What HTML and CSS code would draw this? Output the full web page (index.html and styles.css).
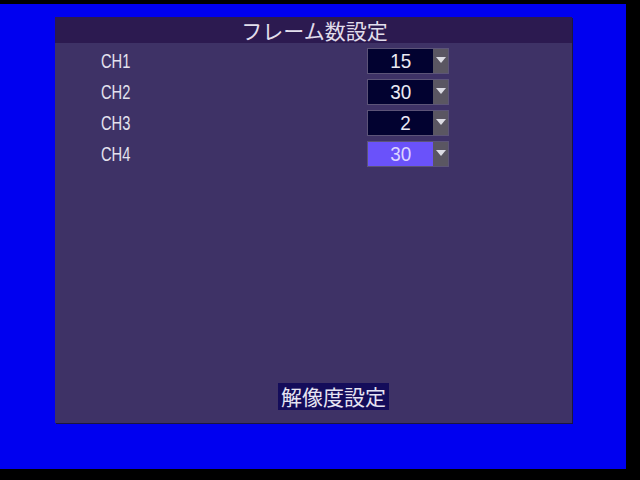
FILE: index.html
```html
<!DOCTYPE html>
<html lang="ja">
<head>
<meta charset="utf-8">
<title>フレーム数設定</title>
<link rel="stylesheet" href="styles.css">
</head>
<body>
<div class="screen">
  <div class="panel">
    <div class="header">フレーム数設定</div>
    <div class="body">
      <div class="rows">
        <div class="row">
          <span class="label"><span class="cond">CH1</span></span>
          <div class="select"><div class="field"><span class="num">15</span></div><div class="arrow"><span class="tri"></span></div></div>
        </div>
        <div class="row">
          <span class="label"><span class="cond">CH2</span></span>
          <div class="select"><div class="field"><span class="num">30</span></div><div class="arrow"><span class="tri"></span></div></div>
        </div>
        <div class="row">
          <span class="label"><span class="cond">CH3</span></span>
          <div class="select"><div class="field"><span class="num">2</span></div><div class="arrow"><span class="tri"></span></div></div>
        </div>
        <div class="row">
          <span class="label"><span class="cond">CH4</span></span>
          <div class="select active"><div class="field"><span class="num">30</span></div><div class="arrow"><span class="tri"></span></div></div>
        </div>
      </div>
      <div class="button">解像度設定</div>
    </div>
  </div>
</div>
</body>
</html>
```

FILE: styles.css
```css
html, body {
  margin: 0;
  padding: 0;
  background: #000;
  width: 640px;
  height: 480px;
  overflow: hidden;
}

.screen {
  margin-top: 4px;
  width: 626px;
  height: 465px;
  background: #0000f0;
  box-sizing: border-box;
  padding: 13px 54px 46px 55px;
  display: flex;
}

.panel {
  flex: 1;
  display: flex;
  flex-direction: column;
  background: #3e3266;
  box-shadow: 1px 1px 0 #1c1640;
}

.header {
  height: 26px;
  background: #2c1a50;
  color: #e2deec;
  font-family: "Noto Sans CJK JP", sans-serif;
  font-size: 21px;
  line-height: 26px;
  text-align: center;
  padding-left: 2px;
}

.body {
  flex: 1;
  display: flex;
  flex-direction: column;
  justify-content: space-between;
  padding: 5px 0 13px 0;
}

.rows {
  display: flex;
  flex-direction: column;
  gap: 5px;
}

.row {
  display: grid;
  grid-template-columns: 266px 82px;
  padding-left: 46px;
  align-items: center;
  height: 26px;
}

.label {
  font-family: "Liberation Sans", Arial, sans-serif;
  font-size: 21px;
  color: #e4e2ee;
  line-height: 26px;
}

.cond {
  display: inline-block;
  transform: scaleX(0.7);
  transform-origin: left center;
}

.select {
  display: flex;
  height: 26px;
  box-sizing: border-box;
  border: 1px solid #5c5478;
}

.field {
  width: 65px;
  background: #020230;
  text-align: right;
  padding-right: 22px;
  box-sizing: border-box;
  font-family: "Liberation Sans", Arial, sans-serif;
  font-size: 21px;
  line-height: 24px;
  color: #eceaf4;
}

.num {
  display: inline-block;
  transform: scaleX(0.9);
  transform-origin: right center;
}

.select.active .field {
  background: #6a52fa;
  color: #dcd4ff;
}

.arrow {
  flex: 1;
  background: #5a5662;
  display: flex;
  align-items: center;
  justify-content: center;
  padding-bottom: 3px;
}

.tri {
  width: 0;
  height: 0;
  border-left: 5px solid transparent;
  border-right: 5px solid transparent;
  border-top: 6px solid #dcdce4;
}

.button {
  align-self: flex-start;
  margin-left: 223px;
  height: 27px;
  padding: 0 3px;
  background: #140c5a;
  color: #e6e4f2;
  font-family: "Noto Sans CJK JP", sans-serif;
  font-size: 21px;
  line-height: 27px;
}
```
